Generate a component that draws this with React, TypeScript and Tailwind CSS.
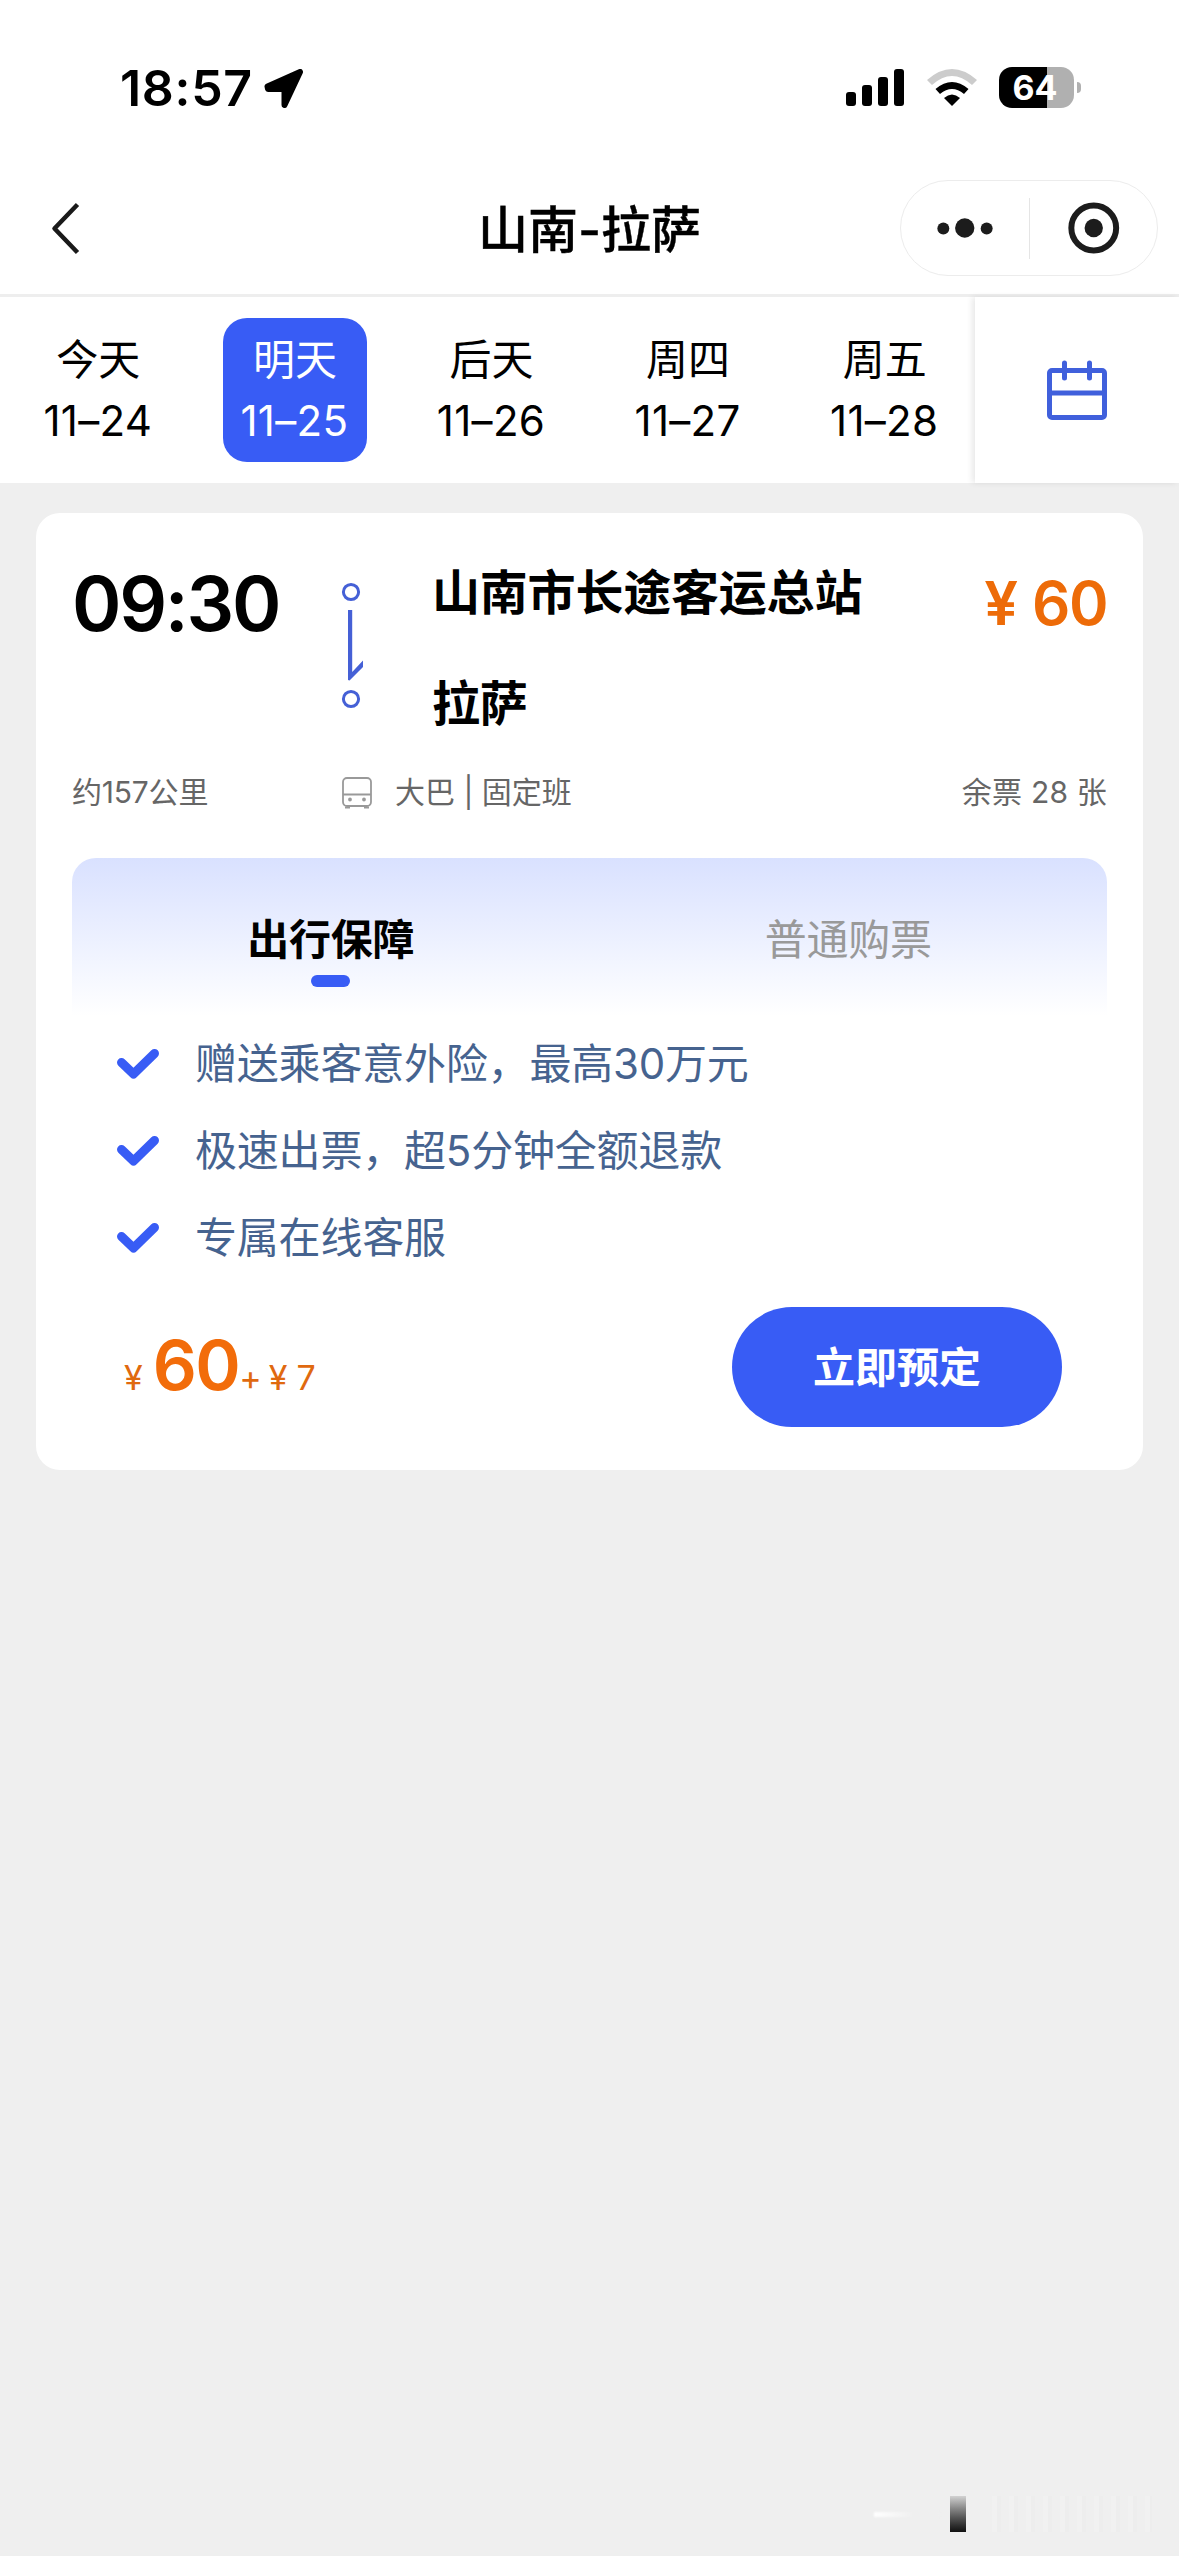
import React from 'react';

const DAYS = [
  { label: '今天', date: '11–24' },
  { label: '明天', date: '11–25' },
  { label: '后天', date: '11–26' },
  { label: '周四', date: '11–27' },
  { label: '周五', date: '11–28' },
];

const BENEFITS = ['赠送乘客意外险，最高30万元', '极速出票，超5分钟全额退款', '专属在线客服'];

function StatusBar() {
  return (
    <div className="flex h-[177px] items-start pt-[67px] pl-[120px] pr-[98px]">
      <span className="mt-[-3px] w-[144px] text-[50px] leading-[48px] font-semibold tracking-[0.7px] whitespace-nowrap">
        18:57
      </span>
      <svg className="mt-[2px] h-10 w-10" viewBox="0 0 40 40">
        <path d="M3.500 17.500 36 3 20.500 36V20H4Z" fill="#000" stroke="#000" strokeWidth="6" strokeLinejoin="round" />
      </svg>

      <div className="ml-auto flex items-start">
        <svg className="mt-[2px] h-[38px] w-[58px]" viewBox="0 0 58 38">
          <rect x="0" y="23" width="10" height="14" rx="3" />
          <rect x="16" y="16" width="10" height="21" rx="3" />
          <rect x="32" y="8" width="10" height="29" rx="3" />
          <rect x="48" y="0" width="10" height="37" rx="3" />
        </svg>
        <svg className="mt-[2px] ml-[23px] h-[38px] w-[50px]" viewBox="0 0 50 38">
          <path d="M0 11Q25-11 50 11L45 16Q25-2 5 16Z" fill="#ccc" />
          <path d="M8.500 20Q25 6 41.500 20L37 25Q25 15 13 25Z" />
          <path d="M17 29Q25 22 33 29L25 37Z" />
        </svg>
        <div className="ml-[22px] flex h-[41px] w-[75px] items-center justify-center rounded-[13px] bg-[linear-gradient(to_right,#000_64%,#b0b0b0_64%)] pr-[3px] text-[34px] leading-none font-bold text-white">
          64
        </div>
        <div className="mt-[15px] ml-[3px] h-[11px] w-1 rounded-r-full bg-[#b0b0b0]" />
      </div>
    </div>
  );
}

function NavBar() {
  return (
    <header className="grid h-[120px] grid-cols-[1fr_auto_1fr] items-start border-b-[3px] border-[#eee] px-[21px]">
      <svg className="mt-6 ml-[29px] h-14 w-8" viewBox="0 0 32 56" fill="none" stroke="#1a1a1a" strokeWidth="4.500">
        <path d="M27.500 3.500 4.500 27.500 27.500 51.500" strokeLinejoin="round" />
      </svg>
      <h1 className="mt-[25px] text-[50px] leading-[56px] font-medium [-webkit-text-stroke:0.4px_#000]">山南-拉萨</h1>
      <div className="mt-[3px] ml-auto flex h-24 w-[258px] items-center rounded-full border border-[#ececec]">
        <svg className="h-10 w-[128px]" viewBox="0 0 128 40" fill="#1c1c1c">
          <circle cx="42.500" cy="20.500" r="6" />
          <circle cx="64" cy="20" r="9.700" />
          <circle cx="86" cy="20.500" r="6" />
        </svg>
        <div className="h-[61px] w-px bg-[#e5e5e5]" />
        <svg className="h-14 w-[128px]" viewBox="0 0 128 56">
          <circle cx="64" cy="28" r="22.500" fill="none" stroke="#1c1c1c" strokeWidth="6" />
          <circle cx="64" cy="28" r="9.200" fill="#1c1c1c" />
        </svg>
      </div>
    </header>
  );
}

function DateBar() {
  const [active, setActive] = React.useState(1);

  return (
    <div className="flex h-[186px] bg-white">
      <div className="flex flex-1 items-start overflow-hidden pt-[21px]">
        {DAYS.map((day, i) => (
          <div key={day.date} className="flex w-[196.600px] shrink-0 justify-center">
            <button
              onClick={() => setActive(i)}
              className={`flex h-36 w-36 flex-col items-center rounded-3xl pt-[12px] text-[42px] leading-[60px] ${
                i === active ? 'bg-[#385cf5] text-white' : 'text-black'
              }`}
            >
              <span>{day.label}</span>
              <span className="mt-[1px] mr-[1px] tracking-[0.3px]">{day.date}</span>
            </button>
          </div>
        ))}
      </div>
      <div className="flex w-[204px] justify-center bg-white pt-[62px] shadow-[-3px_0_6px_rgba(0,0,0,0.09)]">
        <svg className="h-[62px] w-[62px]" viewBox="0 0 62 62" fill="none" stroke="#4060dc" strokeWidth="5">
          <rect x="3.500" y="11.500" width="55" height="47" rx="2.500" />
          <path d="M3 34h56" />
          <path d="M18.500 4v15M43.500 4v15" strokeLinecap="round" />
        </svg>
      </div>
    </div>
  );
}

function TripSummary() {
  return (
    <>
      <div className="flex h-[214px] items-start">
        <div className="mt-[6px] w-[266px] text-[75px] leading-[80px] font-semibold tracking-[-2.3px]">09:30</div>
        <svg className="mt-[20px] h-[132px] w-[28px]" viewBox="0 0 28 132" fill="none" stroke="#4560d6">
          <circle cx="13" cy="14" r="7.600" strokeWidth="3" />
          <path d="M10 32H14.200V94L25 82.500V89L11.500 102.500 10 102Z" fill="#4560d6" stroke="none" />
          <circle cx="13" cy="121" r="7.600" strokeWidth="3" />
        </svg>
        <div className="ml-[66px] text-[48px] leading-[56px] font-bold tracking-[-0.2px]">
          <div className="mt-[7px]">山南市长途客运总站</div>
          <div className="mt-[55px]">拉萨</div>
        </div>
        <div className="mt-[9px] ml-auto flex items-baseline text-[60px] leading-[72px] font-semibold text-[#ed6b08]">
          <span className="mr-[14px] text-[60px]">¥</span>
          <span className="tracking-[-1.500px]">60</span>
        </div>
      </div>

      <div className="flex h-[86px] items-start text-[30px] leading-[40px] text-[#666]">
        <span className="w-[268px] tracking-[-0.2px]">约157公里</span>
        <svg className="mt-[5px] h-8 w-[34px]" viewBox="0 0 34 32" fill="none" stroke="#999" strokeWidth="1.800">
          <rect x="3" y="1" width="28" height="28" rx="4" />
          <path d="M3 17.500h28M5 30.500h5M24 30.500h5" />
          <circle cx="10" cy="22.500" r="1" fill="#999" />
          <circle cx="24" cy="22.500" r="1" fill="#999" />
        </svg>
        <span className="ml-[21px]">大巴 | 固定班</span>
        <span className="ml-auto tracking-[0.2px]">余票 28 张</span>
      </div>
    </>
  );
}

function TicketOptions() {
  return (
    <section>
      <div className="grid h-[158px] grid-cols-2 rounded-t-3xl bg-linear-to-b from-[#d9e1ff] to-white pt-[52px] text-center text-[42px] leading-[60px] tracking-[-0.2px]">
        <div className="flex flex-col items-center">
          <span className="font-bold">出行保障</span>
          <span className="mt-[5px] h-3 w-[39px] rounded-full bg-[#385cf5]" />
        </div>
        <span className="text-[#999]">普通购票</span>
      </div>

      <ul className="pt-[4px] pl-[43px] text-[42px] leading-[87px] tracking-[-0.2px] text-[#46638f]">
        {BENEFITS.map((benefit) => (
          <li key={benefit} className="flex h-[87px] items-center">
            <svg className="mr-[34px] h-9 w-[46px]" viewBox="0 0 46 36" fill="none">
              <path d="M6.500 16.500 18.500 28 39.500 7.500" stroke="#385cf5" strokeWidth="9" strokeLinecap="round" strokeLinejoin="round" />
            </svg>
            {benefit}
          </li>
        ))}
      </ul>

      <div className="mt-[26px] flex items-center justify-between pr-[45px] pl-[52px]">
        <div className="mt-[9px] flex items-baseline text-[34px] leading-[80px] text-[#e0690f]">
          <span>¥</span>
          <span className="ml-[10px] text-[69px] font-semibold tracking-[-1.500px] text-[#f26c0a]">60</span>
          <span>+</span>
          <span className="ml-[7px]">¥</span>
          <span className="ml-[9px]">7</span>
        </div>
        <button className="h-[120px] w-[330px] rounded-full bg-[#385cf5] text-[42px] font-bold text-white">立即预定</button>
      </div>
    </section>
  );
}

// Residue of the corner stamp at the bottom of the page
function CornerMark() {
  return (
    <div className="absolute right-[20px] bottom-[24px] flex h-[36px] w-[285px] items-center">
      <div className="h-[5px] w-[66px] bg-linear-to-r from-white to-[#efefef] to-60% blur-[1px]" />
      <div className="ml-[10px] h-9 w-4 bg-linear-to-b from-[#d2d2d2] to-[#111]" />
      <div className="ml-[26px] h-9 w-[160px] bg-[repeating-linear-gradient(to_right,#f1f1f1_0_5px,#ededed_5px_9px,#efefef_9px_17px)]" />
    </div>
  );
}

const App: React.FC = () => {
  return (
    <div className="relative h-[2556px] w-[1179px] overflow-hidden bg-[#efefef] font-['Inter','Noto_Sans_CJK_SC',sans-serif] text-black">
      <div className="bg-white">
        <StatusBar />
        <NavBar />
      </div>
      <DateBar />
      <main className="mx-9 mt-[30px] h-[957px] rounded-3xl bg-white px-9 pt-[45px]">
        <TripSummary />
        <TicketOptions />
      </main>
      <CornerMark />
    </div>
  );
};

export default App;
